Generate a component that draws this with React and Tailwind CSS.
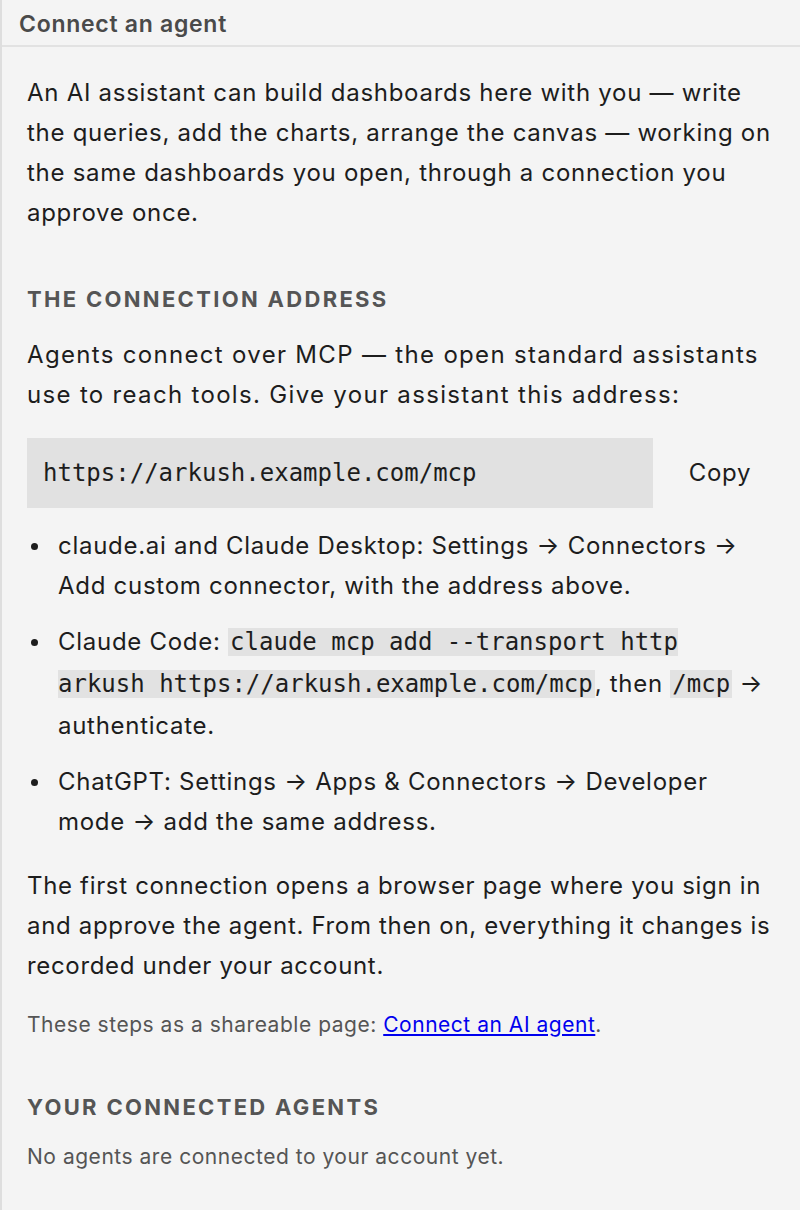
export default function App() {
  const mono = "font-['DejaVu_Sans_Mono',monospace] tracking-normal";
  const code = `${mono} bg-[#e2e2e2] px-[2px] text-[24px]`;
  const Dot = ({ top }) => (
    <span className={`absolute left-[-27px] w-[7px] h-[7px] rounded-full bg-[#1d1d1d] ${top}`} />
  );
  return (
    <div className="min-h-[1210px] bg-[#f4f4f4] border-l-2 border-[#dedede] font-['Inter',sans-serif] text-[#1d1d1d] tracking-[0.045em]">
      {/* Panel header */}
      <div className="h-[47px] border-b-2 border-[#e2e2e2] pl-[17px] pt-[4px] flex items-center">
        <h2 className="text-[23px] font-semibold text-[#4a4a4a] leading-none">Connect an agent</h2>
      </div>

      <div className="pl-[25px] pr-[21px] pt-[26px] pb-10">
        <p className="text-[24px] leading-[40px]">
          An AI assistant can build dashboards here with you — write the queries, add the charts, arrange the canvas — working on the same dashboards you open, through a connection you approve once.
        </p>

        <h3 className="mt-[51px] text-[22px] leading-[30px] font-bold tracking-[0.105em] text-[#555]">THE CONNECTION ADDRESS</h3>
        <p className="mt-[21px] text-[24px] leading-[40px] tracking-[0.055em]">
          Agents connect over MCP — the open standard assistants use to reach tools. Give your assistant this address:
        </p>

        <div className="mt-[23px] flex items-center gap-[8px]">
          <div className={`flex-1 h-[70px] bg-[#e1e1e1] px-[16px] flex items-center text-[24px] ${mono}`}>
            https://arkush.example.com/mcp
          </div>
          <button className="w-[118px] text-[24px] text-center text-[#1d1d1d]">Copy</button>
        </div>

        <ul className="mt-[18px] pl-[31px] text-[24px] leading-[40px] space-y-[15px]">
          <li className="relative">
            <Dot top="top-[17px]" />
            claude.ai and Claude Desktop: Settings → Connectors → Add custom connector, with the address above.
          </li>
          <li className="relative leading-[42px]">
            <Dot top="top-[18px]" />
            Claude Code: <code className={code}>claude mcp add --transport http arkush https://arkush.example.com/mcp</code>, then <code className={code}>/mcp</code> → authenticate.
          </li>
          <li className="relative">
            <Dot top="top-[17px]" />
            ChatGPT: Settings → Apps &amp; Connectors → Developer mode → add the same address.
          </li>
        </ul>

        <p className="mt-[24px] text-[24px] leading-[40px] tracking-[0.028em]">
          The first connection opens a browser page where you sign in and approve the agent. From then on, everything it changes is recorded under your account.
        </p>

        <p className="mt-[23px] text-[21px] leading-[32px] text-[#555] tracking-[0.025em]">
          These steps as a shareable page: <a href="#" className="text-[#0000ee] underline">Connect an AI agent</a>.
        </p>

        <h3 className="mt-[51px] text-[22px] leading-[30px] font-bold tracking-[0.105em] text-[#555]">YOUR CONNECTED AGENTS</h3>
        <p className="mt-[19px] text-[21px] leading-[32px] text-[#555] tracking-[0.025em]">No agents are connected to your account yet.</p>
      </div>
    </div>
  );
}
